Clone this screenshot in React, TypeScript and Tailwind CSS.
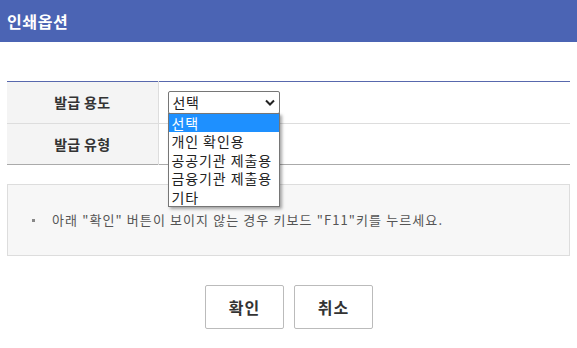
import React from "react"

const font = { fontFamily: '"Noto Sans CJK KR", "Noto Sans", sans-serif' }

const options = ["선택", "개인 확인용", "공공기관 제출용", "금융기관 제출용", "기타"]

export default function App() {
  return (
    <div className="w-[577px] h-[348px] bg-white text-[#333]" style={font}>
      <div className="h-[42px] bg-[#4b64b4] flex items-center px-[7px]">
        <h1 className="text-[16px] font-bold text-white tracking-[0.6px]">인쇄옵션</h1>
      </div>

      <div className="px-[7px] pt-[39px]">
        <table className="w-full border-collapse border-t-[1px] border-t-[#5868ad] border-b border-b-[#aaa]">
          <tbody>
            <tr className="h-[42px] border-b border-[#ddd]">
              <th className="w-[151px] bg-[#f4f4f4] border-r border-[#ddd] text-[14px] font-bold text-[#333] tracking-[0.3px]">
                발급 용도
              </th>
              <td className="pl-[9px]">
                <div className="relative w-[112px]">
                  <div className="h-[23px] border border-[#767676] rounded-[2px] flex items-center justify-between pl-[4px] pr-[4px] text-[14px] text-[#222] tracking-[0.5px]">
                    <span>선택</span>
                    <svg width="10" height="7" viewBox="0 0 10 7">
                      <path d="M1 1.5 L5 5.5 L9 1.5" fill="none" stroke="#222" strokeWidth="2" />
                    </svg>
                  </div>
                  <ul className="absolute left-0 top-[22px] z-10 w-[112px] bg-white border border-[#767676] shadow-[2px_2px_3px_rgba(0,0,0,0.35)] text-[14px] leading-[18.4px] text-[#222] tracking-[0.9px]">
                    {options.map((o, i) => (
                      <li key={o} className={i === 0 ? "bg-[#1e90ff] text-white pl-[3px]" : "pl-[3px]"}>
                        {o}
                      </li>
                    ))}
                  </ul>
                </div>
              </td>
            </tr>
            <tr className="h-[41px]">
              <th className="bg-[#f4f4f4] border-r border-[#ddd] text-[14px] font-bold text-[#333] tracking-[0.3px]">
                발급 유형
              </th>
              <td></td>
            </tr>
          </tbody>
        </table>

        <div className="mt-[19px] h-[72px] bg-[#f7f7f7] border border-[#ddd] flex items-center pl-[24px]">
          <span className="w-[3px] h-[3px] bg-[#888] mr-[17px]" />
          <p className="text-[13px] text-[#555] tracking-[1.1px]">
            아래 "확인" 버튼이 보이지 않는 경우 키보드 "F11"키를 누르세요.
          </p>
        </div>

        <div className="mt-[29px] flex justify-center gap-[10px] pl-[1px]">
          <button className="w-[79px] h-[44px] border border-[#bbb] rounded-[2px] bg-white text-[16px] font-bold text-[#333] tracking-[1px]">
            확인
          </button>
          <button className="w-[79px] h-[44px] border border-[#bbb] rounded-[2px] bg-white text-[16px] font-bold text-[#333] tracking-[1px]">
            취소
          </button>
        </div>
      </div>
    </div>
  )
}
